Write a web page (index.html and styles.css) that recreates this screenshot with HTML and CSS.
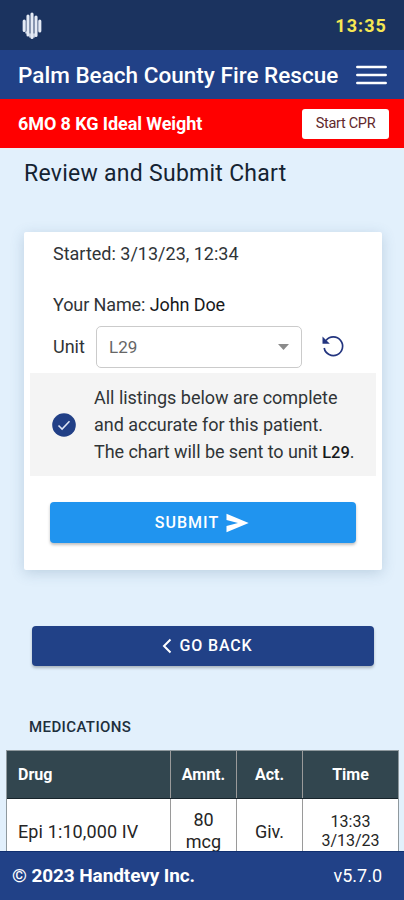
FILE: index.html
```html
<!DOCTYPE html>
<html lang="en">
<head>
<meta charset="utf-8">
<title>Review and Submit Chart</title>
<link rel="stylesheet" href="styles.css">
</head>
<body>
<div class="app">
  <header>
    <div class="status">
      <svg class="hand" width="20" height="28" viewBox="0 0 20 28" fill="none" stroke="#e4eaf5" stroke-width="3.1" stroke-linecap="round"><path d="M2.2 9v9.500M6 4v19M10 2v23.500M14 5v18.500M17.800 9v10"/><path d="M4.100 20v1M8 22v3M12 22v3" stroke-width="1.500"/></svg>
      <span class="clock">13:35</span>
    </div>
    <div class="titlebar">
      <span class="org">Palm Beach County Fire Rescue</span>
      <svg width="31" height="20" viewBox="0 0 31 20" stroke="#fff" stroke-width="2.500" stroke-linecap="round"><path d="M1.300 2h28.400M1.300 10h28.400M1.300 18h28.400"/></svg>
    </div>
    <div class="patient">
      <span class="weight">6MO 8 KG Ideal Weight</span>
      <button class="cpr"><span>Start CPR</span></button>
    </div>
  </header>
  <main>
    <h1><span>Review and Submit Chart</span></h1>
    <section class="card">
      <p class="started"><span>Started: 3/13/23, 12:34</span></p>
      <p class="name"><span>Your Name: <b>John Doe</b></span></p>
      <div class="unit">
        <span class="unit-label">Unit</span>
        <div class="select"><span>L29</span><svg width="11" height="6" viewBox="0 0 11 6"><path d="M0 0h11L5.500 6z" fill="#8b8b8b"/></svg></div>
        <svg class="reset" width="24" height="24" viewBox="0 0 24 24" fill="none" stroke="#23357f" stroke-width="1.700"><path d="M5 6.500A9.300 9.300 0 1 1 3.200 14"/><path d="M1.500 2.500v7.300h7.300z" fill="#23357f" stroke="none"/></svg>
      </div>
      <div class="confirm">
        <svg width="24" height="24" viewBox="0 0 24 24"><circle cx="12" cy="12" r="11.800" fill="#213f86"/><path d="M6.500 12.400l3.600 3.700 7.400-7.800" fill="none" stroke="#dfe6f5" stroke-width="1.500"/></svg>
        <div class="lines"><span class="l1">All listings below are complete</span><span class="l2">and accurate for this patient.</span><span class="l3">The chart will be sent to unit <b>L29</b>.</span></div>
      </div>
      <button class="submit"><span>SUBMIT</span><svg width="23" height="20" viewBox="0 0 23 20"><path d="M.5.700L22.700 10 .500 19.300v-6.200L12 10 .500 6.900z" fill="#fff"/></svg></button>
    </section>
    <button class="back"><svg width="10" height="16" viewBox="0 0 10 16" fill="none" stroke="#fff" stroke-width="2"><path d="M8.500 1.500L2 8l6.500 6.500"/></svg><span>GO BACK</span></button>
    <h2><span>MEDICATIONS</span></h2>
    <div class="table">
      <div class="row head"><div>Drug</div><div>Amnt.</div><div>Act.</div><div>Time</div></div>
      <div class="row"><div class="drug"><span>Epi 1:10,000 IV</span></div><div class="amount">80<br>mcg</div><div class="act">Giv.</div><div class="time">13:33<br>3/13/23</div></div>
    </div>
  </main>
  <footer><span class="copy">© 2023 Handtevy Inc.</span><span class="version">v5.7.0</span></footer>
</div>
</body>
</html>
```
FILE: styles.css
```css
* { box-sizing: border-box; }
body { margin: 0; font-family: Roboto, sans-serif; color: #303437; }
button { border: 0; padding: 0; font-family: inherit; }
span { white-space: nowrap; }
svg { flex: none; display: block; }
.app { width: 404px; height: 900px; display: flex; flex-direction: column; overflow: hidden; background: #e2f0fc; }
header { flex: none; }
.status { height: 50px; background: #1b335f; display: flex; align-items: center; justify-content: space-between; padding: 1px 17px 0 22px; }
.clock { color: #f5e653; font-size: 18px; font-weight: 700; letter-spacing: 1.05px; }
.titlebar { height: 49px; background: #214187; color: #fff; display: flex; align-items: center; justify-content: space-between; padding: 0 17px 0 18px; }
.org { font-size: 22.500px; font-weight: 500; letter-spacing: .02px; }
.patient { height: 49px; background: #f00; color: #fff; display: flex; align-items: center; justify-content: space-between; padding: 0 15px 0 18px; }
.weight { font-size: 18px; font-weight: 700; letter-spacing: -.09px; }
.cpr { width: 87px; height: 30px; border-radius: 3px; background: #fff; color: #61282b; font-size: 14.500px; letter-spacing: -.3px; }
main { flex: 1; min-height: 0; overflow: hidden; display: flex; flex-direction: column; border-top: 2px solid #eaf0f5; }
h1 { margin: 10px 0 0 24px; font-size: 23px; line-height: 28px; font-weight: 400; letter-spacing: .27px; color: #142332; }
.card { flex: none; width: 358px; height: 338px; margin: 44px 0 0 24px; background: #fff; border-radius: 2px; box-shadow: 0 3px 14px rgba(65,105,140,.23); display: flex; flex-direction: column; }
p { margin: 0 0 0 29px; font-size: 18px; line-height: 24px; }
b { font-weight: 400; color: #17191b; }
.started { margin-top: 10px; }
.name { margin-top: 27px; letter-spacing: -.1px; }
.unit { height: 42px; margin: 9px 0 0 29px; display: flex; align-items: center; }
.unit-label { width: 43px; font-size: 18px; padding-bottom: 1px; }
.select { width: 206px; height: 42px; border: 1px solid #cbcbcb; border-radius: 5px; display: flex; align-items: center; justify-content: space-between; padding: 0 12px 1px; color: #666; font-size: 17px; }
.reset { margin-left: 19px; margin-bottom: 2px; }
.confirm { width: 346px; height: 103px; margin: 5px 0 0 6px; padding-left: 22px; background: #f4f4f4; display: flex; align-items: center; gap: 18px; }
.lines { display: flex; flex-direction: column; font-size: 18px; line-height: 27px; letter-spacing: -.02px; }
.l3 { letter-spacing: -.06px; }
.lines b { font-weight: 500; font-size: 16.500px; }
button.submit, .back { display: flex; align-items: center; justify-content: center; color: #fff; font-size: 16px; font-weight: 500; letter-spacing: 1px; border-radius: 4px; flex: none; box-shadow: 0 2px 3px rgba(0,0,0,.25); }
button.submit { width: 306px; height: 41px; margin: 26px 0 0 26px; padding-right: 2px; background: #2094ef; gap: 7px; }
button.back { width: 342px; height: 40px; margin: 56px 0 0 32px; padding: 0 0 1px 8px; background: #214187; gap: 8px; letter-spacing: .85px; }
h2 { margin: 51px 0 0 29px; font-size: 15px; line-height: 20px; font-weight: 500; letter-spacing: .4px; color: #202f3c; }
.table { flex: none; width: 393px; margin: 13px 0 0 6px; border: solid #8f999e; border-width: 1px 1px 0; }
.row { height: 64px; display: grid; grid-template-columns: 163px 66px 66px 96px; background: #fff; color: #252525; }
.row > div { display: flex; align-items: center; justify-content: center; text-align: center; border-left: 1px solid #9a9a9a; }
.row > div:first-child { border-left: 0; justify-content: flex-start; padding-left: 11px; }
.row.head { height: 48px; background: #32464f; color: #fff; font-weight: 700; font-size: 16px; border-bottom: 1px solid #17242b; }
.drug { font-size: 18px; letter-spacing: .12px; }
.row .amount { font-size: 18px; line-height: 22px; }
.act { font-size: 18px; }
.time { font-size: 16px; line-height: 19px; }
footer { flex: none; height: 49px; background: #214187; border-top: 1px solid #102f70; color: #fff; display: flex; align-items: center; justify-content: space-between; padding: 0 22px 2px 12px; font-size: 18px; }
.copy { font-weight: 700; font-size: 19px; letter-spacing: -.1px; }
```
